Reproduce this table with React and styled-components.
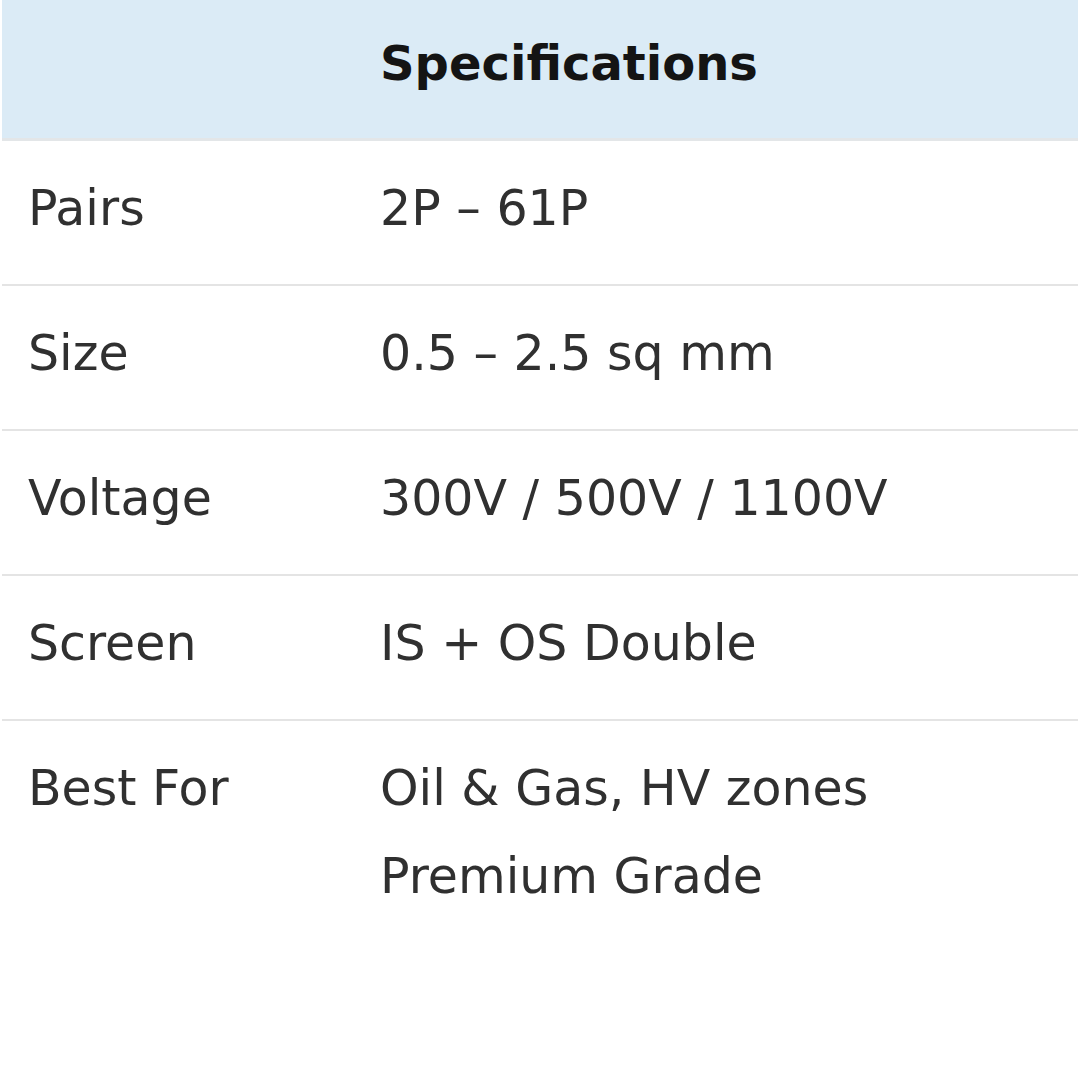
import styled, { createGlobalStyle } from 'styled-components';

const GlobalStyle = createGlobalStyle`
    body {
        margin: 0;
        background: #ffffff;
        font-family: "DejaVu Sans", "Liberation Sans", sans-serif;
    }
`;

const Wrapper = styled.div`
    padding: 0 2px;
`;

const SpecTable = styled.table`
    width: 100%;
    border-collapse: collapse;
    table-layout: fixed;
`;

const HeadCell = styled.th`
    background: #dbebf6;
    border-bottom: 3px solid #e3e6e8;
    height: 82px;
    padding: 22px 26px 34px;
    line-height: 82px;
    font-size: 48px;
    font-weight: 700;
    color: #141414;
    text-align: left;
    white-space: nowrap;
    width: ${(p) => (p.$first ? '352px' : 'auto')};
    box-sizing: ${(p) => (p.$first ? 'border-box' : 'content-box')};
`;

const Row = styled.tr`
    border-bottom: ${(p) => (p.$last ? 'none' : '2px solid #e4e4e4')};
`;

const Cell = styled.td`
    padding: 24px 26px 31px;
    line-height: 88px;
    font-size: 49px;
    color: #303030;
    vertical-align: top;
    white-space: nowrap;
`;

const specs = [
    { label: 'Pairs', value: ['2P – 61P'] },
    { label: 'Size', value: ['0.5 – 2.5 sq mm'] },
    { label: 'Voltage', value: ['300V / 500V / 1100V'] },
    { label: 'Screen', value: ['IS + OS Double'] },
    { label: 'Best For', value: ['Oil & Gas, HV zones', 'Premium Grade'] },
];

const App = () => {
    return (
        <>
            <GlobalStyle />
            <Wrapper>
                <SpecTable>
                    <thead>
                        <tr>
                            <HeadCell $first></HeadCell>
                            <HeadCell>Specifications</HeadCell>
                        </tr>
                    </thead>
                    <tbody>
                        {specs.map((s, i) => (
                            <Row key={s.label} $last={i === specs.length - 1}>
                                <Cell>{s.label}</Cell>
                                <Cell>
                                    {s.value.map((line, j) => (
                                        <div key={j}>{line}</div>
                                    ))}
                                </Cell>
                            </Row>
                        ))}
                    </tbody>
                </SpecTable>
            </Wrapper>
        </>
    );
};

export default App;
